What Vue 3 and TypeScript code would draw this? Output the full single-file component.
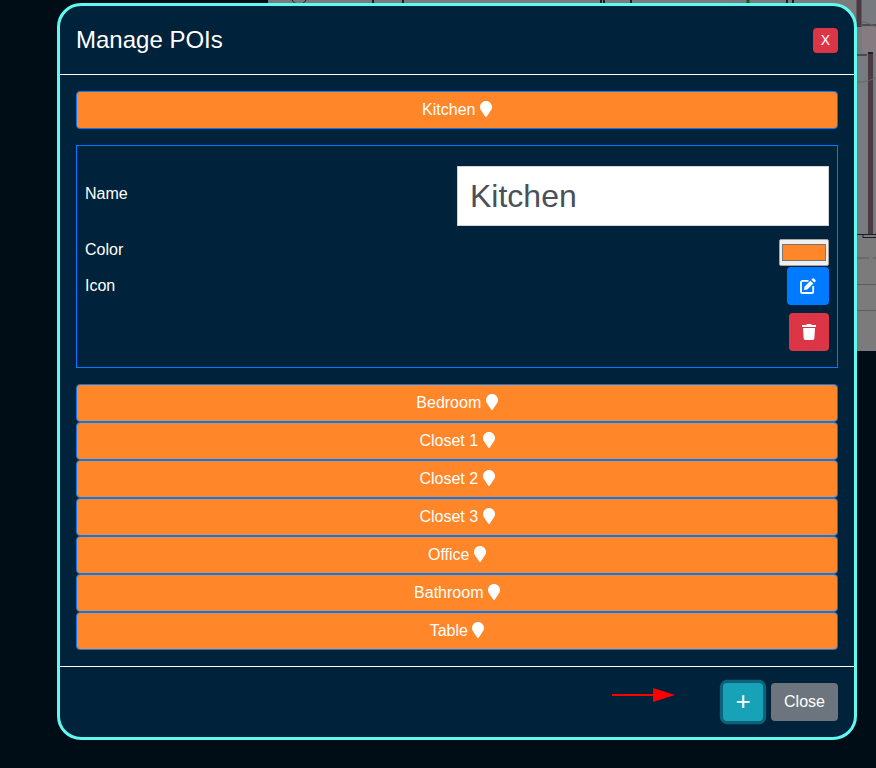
<script setup lang="ts">
const pois = ['Bedroom', 'Closet 1', 'Closet 2', 'Closet 3', 'Office', 'Bathroom', 'Table']
const pin =
  'M172.268 501.67C26.97 291.031 0 269.413 0 192 0 85.961 85.961 0 192 0s192 85.961 192 192c0 77.413-26.97 99.031-172.268 309.67-9.535 13.774-29.93 13.773-39.464 0z'
</script>

<template>
  <div class="page">
    <svg class="plan" width="608" height="351" viewBox="0 0 608 351">
      <rect width="608" height="351" fill="#7b7b7b" />
      <rect x="589" y="0" width="19" height="240" fill="#777b7f" />
      <rect x="594" y="27" width="14" height="26" fill="#857b80" />
      <g stroke="#1d1d22" fill="none">
        <path d="M24 0a8 8 0 0 0 14 0" />
        <path d="M105 0v4M135 0v4M333 0v4M336 0v4M363 0v4M480 0v4M519 0v4M525 0v4" stroke-width="2" />
        <path d="M480 0v4" stroke="#0c5a20" stroke-width="3" />
        <path d="M594 25h14M589 55h10" stroke-width="1" />
        <path d="M591 0v27" stroke="#4a3a42" stroke-width="5" />
        <path d="M602.5 54v180" stroke="#4a3a42" stroke-width="5" />
        <path d="M600 53h5" stroke-width="2" />
        <path d="M589 234.5h19M595 237.5h13M595 234v4" stroke-width="1" />
      </g>
      <path d="M594 22a30 30 0 0 1 -5 60" fill="none" stroke="#666" />
      <path d="M589 258h12M605 258h3" stroke="#5c5c5c" />
      <path d="M589 284.5h19M589 310.5h19" stroke="#5e5e5e" />
    </svg>

    <div class="modal">
      <header class="modal-header">
        <h5 class="modal-title">Manage POIs</h5>
        <button class="btn-x">X</button>
      </header>

      <div class="modal-body">
        <button class="poi">
          Kitchen
          <svg class="pin" viewBox="0 0 384 512"><path :d="pin" /></svg>
        </button>

        <div class="panel">
          <div class="row name-row">
            <label>Name</label>
            <input class="name-input" type="text" value="Kitchen" />
          </div>
          <div class="row color-row">
            <label>Color</label>
            <input class="color-input" type="color" value="#ff8629" />
          </div>
          <div class="row icon-row">
            <label>Icon</label>
            <button class="icon-btn edit">
              <svg width="16" height="16" viewBox="0 0 16 16">
                <path
                  class="edit-frame"
                  d="M8.5 2.8H2.6A1.6 1.6 0 0 0 1 4.4v9A1.6 1.6 0 0 0 2.6 15h9a1.6 1.6 0 0 0 1.6-1.6V8"
                />
                <path
                  d="M14 .6l1.4 1.4a1 1 0 0 1 0 1.4L14.3 4.6 11.4 1.7 12.6.6a1 1 0 0 1 1.4 0zM10.4 2.7l2.9 2.9-6 6-3.3.4.4-3.3z"
                />
              </svg>
            </button>
          </div>
          <div class="row delete-row">
            <button class="icon-btn delete">
              <svg width="14" height="16" viewBox="0 0 448 512">
                <path
                  d="M432 32H312l-9.4-18.7A24 24 0 0 0 281.1 0H166.8a23.72 23.72 0 0 0-21.4 13.3L136 32H16A16 16 0 0 0 0 48v32a16 16 0 0 0 16 16h416a16 16 0 0 0 16-16V48a16 16 0 0 0-16-16zM53.2 467a48 48 0 0 0 47.9 45h245.8a48 48 0 0 0 47.9-45L416 128H32z"
                />
              </svg>
            </button>
          </div>
        </div>

        <div class="poi-list">
          <button v-for="p in pois" :key="p" class="poi">
            {{ p }}
            <svg class="pin" viewBox="0 0 384 512"><path :d="pin" /></svg>
          </button>
        </div>
      </div>

      <footer class="modal-footer">
        <svg class="arrow" width="64" height="16" viewBox="0 0 64 16">
          <path d="M0 8h44" stroke="#f00" stroke-width="2" />
          <path d="M41 1l22 7-22 7z" fill="#f00" />
        </svg>
        <button class="btn-add">+</button>
        <button class="btn-close">Close</button>
      </footer>
    </div>
  </div>
</template>

<style>
html,
body {
  margin: 0;
  background: #000c16;
}
</style>

<style scoped>
.page {
  position: relative;
  width: 876px;
  height: 768px;
  overflow: hidden;
  background: #000c16;
  font-family: 'Liberation Sans', Arial, sans-serif;
  font-size: 16px;
  line-height: 24px;
  color: #fff;
}

.plan {
  position: absolute;
  left: 268px;
  top: 0;
}

.modal {
  position: absolute;
  left: 57px;
  top: 3px;
  width: 800px;
  box-sizing: border-box;
  border: 3px solid #5ffbf1;
  border-radius: 24px;
  background: #00223b;
}

.modal-header {
  display: flex;
  align-items: center;
  justify-content: space-between;
  padding: 16px;
  border-bottom: 1px solid #fff;
}

.modal-title {
  margin: 0;
  font-size: 24px;
  font-weight: 400;
  line-height: 36px;
}

.btn-x {
  width: 25px;
  height: 25px;
  padding: 0;
  border: 0;
  border-radius: 4px;
  background: #dc3545;
  color: #fff;
  font: 14px/21px 'Liberation Sans', Arial, sans-serif;
}

.modal-body {
  padding: 16px;
}

.poi {
  display: block;
  width: 100%;
  height: 38px;
  padding: 0;
  box-sizing: border-box;
  border: 1px solid #007bff;
  border-radius: 4px;
  background: #ff8629;
  color: #fff;
  font: 16px/24px 'Liberation Sans', Arial, sans-serif;
  text-align: center;
}

.pin {
  width: 12px;
  height: 16px;
  fill: #fff;
  vertical-align: -2px;
}

.panel {
  margin: 16px 0;
  padding: 20px 8px 16px;
  border: 1px solid #007bff;
}

.row {
  display: flex;
  align-items: center;
  justify-content: space-between;
}

.name-row {
  margin-bottom: 13px;
}

.name-row label {
  padding-bottom: 4px;
}

.color-row {
  height: 26px;
  margin-bottom: 2px;
}

.color-row label {
  padding-bottom: 4px;
}

.icon-row {
  margin-bottom: 8px;
}

.delete-row {
  justify-content: flex-end;
}

.name-input {
  width: 372px;
  height: 60px;
  box-sizing: border-box;
  padding: 8px 12px;
  border: 1px solid #ced4da;
  border-radius: 0;
  background: #fff;
  color: #495057;
  font: 32px/48px 'Liberation Sans', Arial, sans-serif;
}

.color-input {
  display: block;
  flex: none;
  align-self: flex-start;
  width: 50px;
  height: 27px;
  margin: 0;
  box-sizing: border-box;
  padding: 4px 2px;
  border: 1px solid #a3a3a3;
  border-radius: 2px;
  background: #efefef;
}

.color-input::-webkit-color-swatch-wrapper {
  padding: 0;
}

.color-input::-webkit-color-swatch {
  border: 1px solid #767676;
  border-radius: 0;
}

.icon-btn {
  display: flex;
  align-items: center;
  justify-content: center;
  height: 38px;
  padding: 0;
  border: 0;
  border-radius: 4px;
  color: #fff;
}

.icon-btn svg {
  fill: #fff;
}

.icon-btn svg .edit-frame {
  fill: none;
  stroke: #fff;
  stroke-width: 1.8;
}

.edit {
  width: 42px;
  background: #007bff;
}

.delete {
  width: 40px;
  background: #dc3545;
}

.modal-footer {
  position: relative;
  display: flex;
  justify-content: flex-end;
  gap: 8px;
  padding: 16px;
  border-top: 1px solid #fff;
}

.arrow {
  position: absolute;
  left: 552px;
  top: 20px;
}

.btn-add,
.btn-close {
  height: 38px;
  padding: 0;
  border: 0;
  border-radius: 4px;
  color: #fff;
  font-family: 'Liberation Sans', Arial, sans-serif;
}

.btn-add {
  width: 40px;
  padding-bottom: 5px;
  background: #17a2b8;
  box-shadow: 0 0 0 3.2px rgba(23, 162, 184, 0.5);
  font-size: 26px;
  line-height: 36px;
}

.btn-close {
  width: 67px;
  background: #6c757d;
  font-size: 16px;
}
</style>
